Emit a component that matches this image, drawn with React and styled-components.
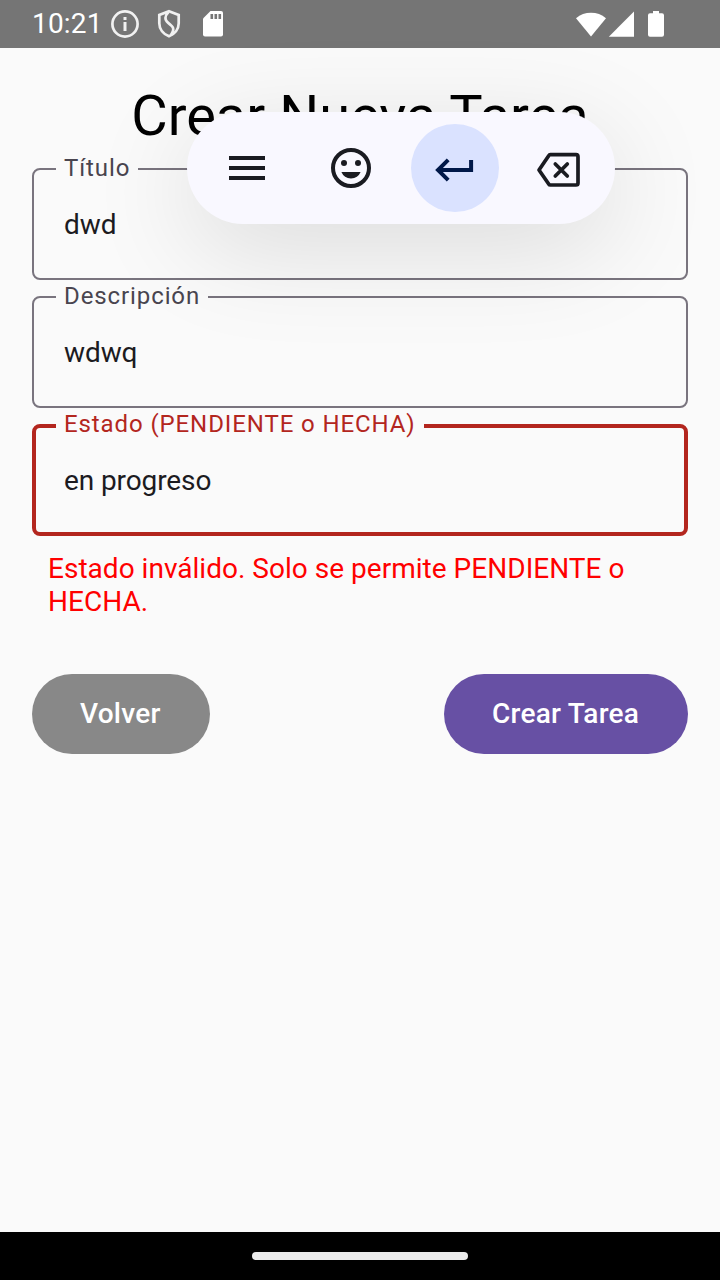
import React from "react";
import styled, { createGlobalStyle } from "styled-components";

const GlobalStyle = createGlobalStyle`
  *, *::before, *::after { box-sizing: border-box; }
  body { margin: 0; font-family: Roboto, sans-serif; background: #fafafa; }
  svg { display: block; flex: none; }
`;

const Screen = styled.div`
  position: relative;
  width: 720px;
  height: 1280px;
  display: flex;
  flex-direction: column;
  overflow: hidden;
  background: #fafafa;
`;

const StatusBar = styled.header`
  height: 48px;
  flex: none;
  display: flex;
  align-items: center;
  justify-content: space-between;
  padding: 0 55px 0 32px;
  background: #757575;
  color: #fff;
`;

const StatusGroup = styled.div`
  display: flex;
  align-items: center;
`;

const Clock = styled.span`
  width: 78px;
  font-size: 28px;
  line-height: 48px;
  letter-spacing: 0.2px;
`;

const Content = styled.main`
  flex: 1;
  display: flex;
  flex-direction: column;
  padding: 35px 32px 0;
`;

const Title = styled.h1`
  margin: 0;
  height: 74px;
  font-size: 56px;
  font-weight: 400;
  line-height: 66px;
  text-align: center;
  color: #000;
`;

const Field = styled.fieldset`
  margin: 0 0 ${(p) => (p.$gap ?? 0)}px;
  height: ${(p) => (p.$error ? 122 : 123)}px;
  min-width: 0;
  padding: 0 ${(p) => (p.$error ? 28 : 30)}px;
  border: ${(p) => (p.$error ? "4px solid #b3261e" : "2px solid #79747e")};
  border-radius: 8px;
`;

const Label = styled.legend`
  height: 24px;
  margin-left: -8px;
  padding: 0 8px;
  font-size: 24px;
  line-height: ${(p) => (p.$error ? 20 : 22)}px;
  letter-spacing: 0.9px;
  white-space: nowrap;
  color: ${(p) => (p.$error ? "#b3261e" : "#49454f")};
`;

const Value = styled.div`
  padding-top: ${(p) => (p.$error ? 26 : 27)}px;
  font-size: 28px;
  line-height: 33px;
  letter-spacing: -0.1px;
  color: #1c1b1f;
`;

const ErrorText = styled.p`
  margin: 16px 16px 0;
  font-size: 28px;
  line-height: 33px;
  letter-spacing: 0.02px;
  color: #ff0000;
`;

const Actions = styled.div`
  display: flex;
  justify-content: space-between;
  margin-top: 56px;
`;

const Button = styled.button`
  min-width: ${(p) => (p.$muted ? 178 : 244)}px;
  height: 80px;
  padding: 0 48px;
  border: 0;
  border-radius: 40px;
  font: 500 28px/80px Roboto, sans-serif;
  letter-spacing: 0.26px;
  text-align: left;
  white-space: nowrap;
  color: #fff;
  background: ${(p) => (p.$muted ? "#888888" : "#6750a4")};
`;

const KeyBar = styled.div`
  position: absolute;
  top: 112px;
  left: 187px;
  width: 428px;
  height: 112px;
  padding: 12px 10px 12px 16px;
  display: flex;
  gap: 16px;
  border-radius: 56px;
  background: #f9f8ff;
  box-shadow: 0 24px 104px rgba(0, 0, 0, 0.125);
`;

const Key = styled.div`
  width: 88px;
  height: 88px;
  flex: none;
  display: grid;
  place-items: center;
  border-radius: 50%;
  background: ${(p) => (p.$active ? "#dae2ff" : "transparent")};
`;

const NavBar = styled.footer`
  height: 48px;
  flex: none;
  display: grid;
  place-items: center;
  background: #000;
`;

const NavHandle = styled.div`
  width: 216px;
  height: 8px;
  border-radius: 4px;
  background: #ebebeb;
`;

const StatusLeftIcons = () => (
  <svg width="114" height="30" viewBox="110 9 114 30" fill="none" stroke="#f1f1f1">
    <circle cx="125" cy="24" r="12.6" strokeWidth="2.7" />
    <path d="M125 22v9" strokeWidth="3" />
    <path d="M125 17v3" strokeWidth="3" />
    <path d="M169 11.300 178.700 15v8.300c0 6-4 10.900-9.700 13-5.700-2.100-9.700-7-9.700-13V15Z" strokeWidth="2.700" />
    <path d="M168.500 12C164.500 16 164.500 20 168.200 22.800C173 26.500 175.300 28.500 171 35" strokeWidth="2.700" />
    <path
      d="M210.500 11H221a2 2 0 0 1 2 2v21.500a2 2 0 0 1-2 2h-16a2 2 0 0 1-2-2V18.500Z"
      fill="#fff"
      stroke="none"
    />
    <path d="M211.800 14v5M215.800 14v5M219.800 14v5" stroke="#757575" strokeWidth="2.600" />
  </svg>
);

const StatusRightIcons = () => (
  <svg width="90" height="30" viewBox="575 9 90 30" fill="#fff">
    <path d="M576 18.200a23.500 23.500 0 0 1 30 0L591 36.500Z" />
    <path d="M634 11.500v25.200h-25.200Z" />
    <path d="M653 11h6v2.300h3a2 2 0 0 1 2 2v19.500a2 2 0 0 1-2 2h-12a2 2 0 0 1-2-2V15.300a2 2 0 0 1 2-2h3Z" />
  </svg>
);

const MenuIcon = () => (
  <svg width="48" height="48" viewBox="0 0 24 24" fill="#1a1b21">
    <path d="M3 18h18v-2H3v2Zm0-5h18v-2H3v2Zm0-7v2h18V6H3Z" />
  </svg>
);

const EmojiIcon = () => (
  <svg width="48" height="48" viewBox="0 0 24 24">
    <circle cx="12" cy="12" r="9" fill="none" stroke="#1a1b21" strokeWidth="2" />
    <circle cx="8.500" cy="9.500" r="1.500" fill="#1a1b21" />
    <circle cx="15.500" cy="9.500" r="1.500" fill="#1a1b21" />
    <path d="M7.200 14h9.600a5.200 5.200 0 0 1-9.600 0Z" fill="#1a1b21" />
  </svg>
);

const EnterIcon = () => (
  <svg width="48" height="48" viewBox="431 144 48 48" fill="none" stroke="#001849" strokeWidth="4">
    <path d="M471.100 160v10H438M448.200 159.800l-10.200 10.200 10.200 10.200" />
  </svg>
);

const BackspaceIcon = () => (
  <svg width="48" height="48" viewBox="535 144 48 48" fill="none" stroke="#1a1b21" strokeLinejoin="round">
    <path
      d="M550.500 154.700H576a2 2 0 0 1 2 2v26.300a2 2 0 0 1-2 2H550.500a2 2 0 0 1-1.800-1L539 170l9.700-14.300a2 2 0 0 1 1.800-1Z"
      strokeWidth="3.700"
    />
    <path d="m555.300 164 12 12M567.300 164l-12 12" strokeWidth="3.700" strokeLinecap="round" />
  </svg>
);

const OutlinedField = ({ label, value, error, gap }) => (
  <Field $error={error} $gap={gap}>
    <Label $error={error}>{label}</Label>
    <Value $error={error}>{value}</Value>
  </Field>
);

export default function App() {
  return (
    <>
      <GlobalStyle />
      <Screen>
        <StatusBar>
          <StatusGroup>
            <Clock>10:21</Clock>
            <StatusLeftIcons />
          </StatusGroup>
          <StatusRightIcons />
        </StatusBar>
        <Content>
          <Title>Crear Nueva Tarea</Title>
          <OutlinedField label="Título" value="dwd" gap={5} />
          <OutlinedField label="Descripción" value="wdwq" gap={6} />
          <OutlinedField label="Estado (PENDIENTE o HECHA)" value="en progreso" error />
          <ErrorText>Estado inválido. Solo se permite PENDIENTE o HECHA.</ErrorText>
          <Actions>
            <Button $muted>Volver</Button>
            <Button>Crear Tarea</Button>
          </Actions>
        </Content>
        <KeyBar>
          <Key><MenuIcon /></Key>
          <Key><EmojiIcon /></Key>
          <Key $active><EnterIcon /></Key>
          <Key><BackspaceIcon /></Key>
        </KeyBar>
        <NavBar><NavHandle /></NavBar>
      </Screen>
    </>
  );
}
